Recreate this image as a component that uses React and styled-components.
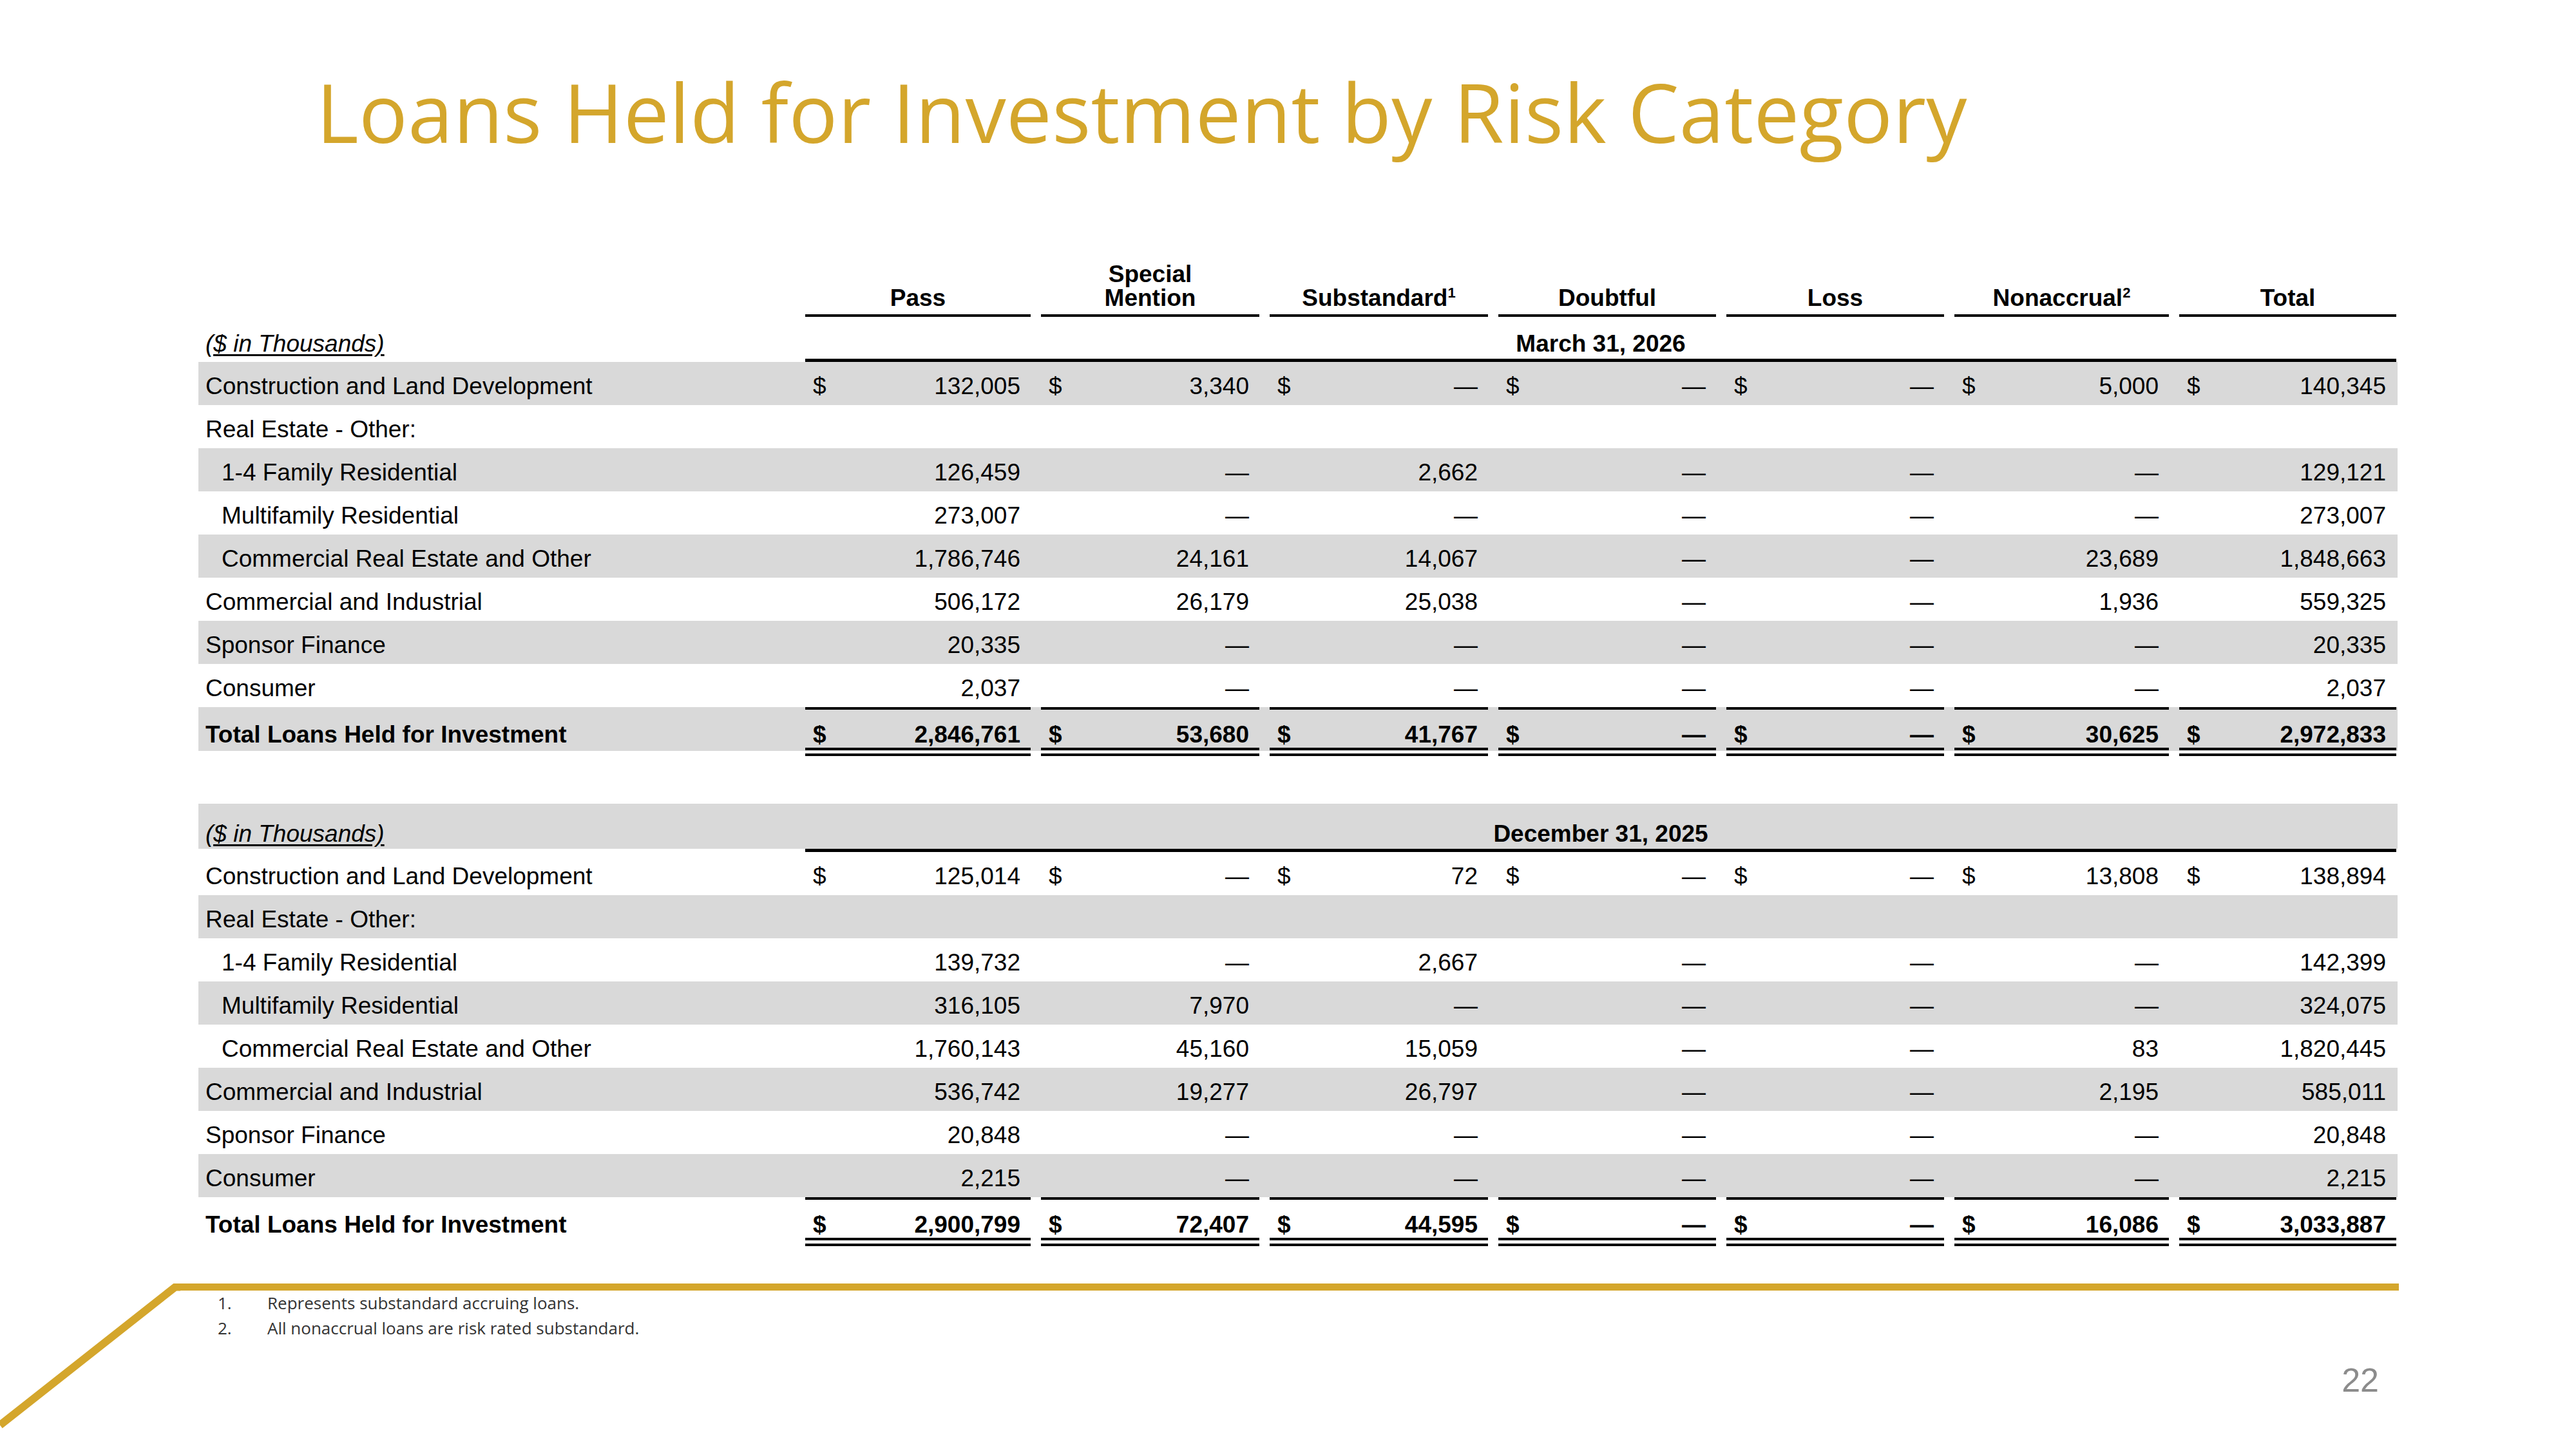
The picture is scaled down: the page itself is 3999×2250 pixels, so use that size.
import React from "react";
import styled, { createGlobalStyle } from "styled-components";

const GOLD = "#D4A62C";
const SHADE = "#D9D9D9";
const COLS = "926px 350px 339px 339px 338px 338px 333px 337px";

const sections = [
  {
    period: "March 31, 2026",
    shadeFirst: true,
    rows: [
      { label: "Construction and Land Development", dollar: true, values: ["132,005", "3,340", "—", "—", "—", "5,000", "140,345"] },
      { label: "Real Estate - Other:", values: [] },
      { label: "1-4 Family Residential", indent: true, values: ["126,459", "—", "2,662", "—", "—", "—", "129,121"] },
      { label: "Multifamily Residential", indent: true, values: ["273,007", "—", "—", "—", "—", "—", "273,007"] },
      { label: "Commercial Real Estate and Other", indent: true, values: ["1,786,746", "24,161", "14,067", "—", "—", "23,689", "1,848,663"] },
      { label: "Commercial and Industrial", values: ["506,172", "26,179", "25,038", "—", "—", "1,936", "559,325"] },
      { label: "Sponsor Finance", values: ["20,335", "—", "—", "—", "—", "—", "20,335"] },
      { label: "Consumer", values: ["2,037", "—", "—", "—", "—", "—", "2,037"] },
    ],
    total: ["2,846,761", "53,680", "41,767", "—", "—", "30,625", "2,972,833"],
  },
  {
    period: "December 31, 2025",
    shadeFirst: false,
    rows: [
      { label: "Construction and Land Development", dollar: true, values: ["125,014", "—", "72", "—", "—", "13,808", "138,894"] },
      { label: "Real Estate - Other:", values: [] },
      { label: "1-4 Family Residential", indent: true, values: ["139,732", "—", "2,667", "—", "—", "—", "142,399"] },
      { label: "Multifamily Residential", indent: true, values: ["316,105", "7,970", "—", "—", "—", "—", "324,075"] },
      { label: "Commercial Real Estate and Other", indent: true, values: ["1,760,143", "45,160", "15,059", "—", "—", "83", "1,820,445"] },
      { label: "Commercial and Industrial", values: ["536,742", "19,277", "26,797", "—", "—", "2,195", "585,011"] },
      { label: "Sponsor Finance", values: ["20,848", "—", "—", "—", "—", "—", "20,848"] },
      { label: "Consumer", values: ["2,215", "—", "—", "—", "—", "—", "2,215"] },
    ],
    total: ["2,900,799", "72,407", "44,595", "—", "—", "16,086", "3,033,887"],
  },
];

const GlobalStyle = createGlobalStyle`
  html, body {
    margin: 0;
    padding: 0;
    background: #fff;
  }
  body {
    font-family: "Liberation Sans", Arial, sans-serif;
    color: #000;
  }
`;

const Slide = styled.div`
  width: 3999px;
  height: 2250px;
  overflow: hidden;
  background: #fff;
  display: flex;
  flex-direction: column;
`;

const Title = styled.h1`
  margin: 0;
  padding: 110px 0 0 491px;
  font-family: "Open Sans", "Noto Sans", sans-serif;
  font-weight: 400;
  font-size: 126px;
  line-height: 126px;
  letter-spacing: 0.35px;
  color: ${GOLD};
`;

const Table = styled.div`
  margin: 159px 0 0 308px;
  width: 3414px;
  display: flex;
  flex-direction: column;
  font-size: 37px;
  line-height: 37px;
`;

const Grid = styled.div`
  display: grid;
  grid-template-columns: ${COLS};
  column-gap: 16px;
  box-sizing: border-box;
`;

// grey band that can stop short of the rule drawn at the row's foot
const shadeBg = (on, clip = 0) =>
  on
    ? `linear-gradient(${SHADE}, ${SHADE}) top left / 100% calc(100% - ${clip}px) no-repeat`
    : "transparent";

const HeadRow = styled(Grid)`
  height: 97px;
`;

const HeadCell = styled.div`
  display: flex;
  flex-direction: column;
  justify-content: flex-end;
  align-items: center;
  padding-bottom: 7px;
  border-bottom: 4px solid #000;
  font-weight: 700;
  text-align: center;
`;

const Sup = styled.sup`
  font-size: 22px;
  line-height: 0;
  vertical-align: 13px;
`;

const PeriodRow = styled(Grid)`
  height: ${(p) => p.$h}px;
  align-items: end;
  margin-top: ${(p) => p.$gap || 0}px;
  background: ${(p) => shadeBg(p.$shade, 5)};
`;

const UnitsLabel = styled.div`
  padding: 0 0 10px 11px;
  font-style: italic;
  text-decoration: underline;
  text-underline-offset: 4px;
`;

const PeriodTitle = styled.div`
  grid-column: 2 / -1;
  padding-bottom: 5px;
  border-bottom: 5px solid #000;
  font-weight: 700;
  text-align: center;
`;

const DataRow = styled(Grid)`
  height: 67px;
  padding-top: 8px;
  align-items: center;
  background: ${(p) => shadeBg(p.$shade)};
`;

const Label = styled.div`
  padding-left: ${(p) => (p.$indent ? 36 : 11)}px;
  white-space: nowrap;
`;

const Value = styled.div`
  display: flex;
  justify-content: space-between;
  padding: 0 16px 0 12px;
  white-space: nowrap;
`;

const TotalRow = styled(Grid)`
  height: 76px;
  font-weight: 700;
  background: ${(p) => shadeBg(p.$shade, 8)};
`;

const TotalLabel = styled(Label)`
  align-self: end;
  padding-bottom: 15px;
`;

const TotalValue = styled(Value)`
  align-items: flex-end;
  padding-bottom: 2px;
  border-top: 4px solid #000;
  border-bottom: 13px double #000;
`;

const Footer = styled.div`
  margin-top: 58px;
  flex: 1;
  display: flex;
`;

const Slash = styled.svg`
  flex: none;
  display: block;
`;

const FootBody = styled.div`
  width: 3444px;
  border-top: 11px solid ${GOLD};
  display: flex;
  flex-direction: column;
`;

const Notes = styled.ol`
  margin: 0;
  padding: 0 0 0 58px;
  list-style: none;
  font-family: "Open Sans", "Noto Sans", sans-serif;
  font-size: 26px;
  line-height: 39px;
  color: #333;
`;

const Note = styled.li`
  display: grid;
  grid-template-columns: 77px 1fr;
`;

const PageNumber = styled.div`
  align-self: flex-end;
  margin: 35px 31px 0 0;
  font-size: 52px;
  line-height: 52px;
  color: #8c8c8c;
`;

const headers = [
  "Pass",
  <>Special<br />Mention</>,
  <>Substandard<Sup>1</Sup></>,
  "Doubtful",
  "Loss",
  <>Nonaccrual<Sup>2</Sup></>,
  "Total",
];

const Cell = ({ value, dollar, as: Comp = Value }) => (
  <Comp>
    <span>{dollar ? "$" : ""}</span>
    <span>{value}</span>
  </Comp>
);

const Section = ({ data, first }) => (
  <>
    <PeriodRow $h={first ? 70 : 75} $gap={first ? 0 : 74} $shade={!data.shadeFirst}>
      <UnitsLabel>($ in Thousands)</UnitsLabel>
      <PeriodTitle>{data.period}</PeriodTitle>
    </PeriodRow>
    {data.rows.map((row, i) => (
      <DataRow key={row.label} $shade={(i % 2 === 0) === data.shadeFirst}>
        <Label $indent={row.indent}>{row.label}</Label>
        {row.values.map((v, j) => (
          <Cell key={j} value={v} dollar={row.dollar} />
        ))}
      </DataRow>
    ))}
    <TotalRow $shade={data.shadeFirst}>
      <TotalLabel>Total Loans Held for Investment</TotalLabel>
      {data.total.map((v, j) => (
        <Cell key={j} value={v} dollar as={TotalValue} />
      ))}
    </TotalRow>
  </>
);

export default function App() {
  return (
    <>
      <GlobalStyle />
      <Slide>
        <Title>Loans Held for Investment by Risk Category</Title>
        <Table>
          <HeadRow>
            <div />
            {headers.map((h, i) => (
              <HeadCell key={i}>
                <div>{h}</div>
              </HeadCell>
            ))}
          </HeadRow>
          {sections.map((s, i) => (
            <Section key={s.period} data={s} first={i === 0} />
          ))}
        </Table>
        <Footer>
          <Slash width="280" height="256" viewBox="0 0 280 256">
            <polyline
              points="281,5.5 272,5.5 0,220"
              fill="none"
              stroke={GOLD}
              strokeWidth="12"
              strokeLinejoin="miter"
            />
          </Slash>
          <FootBody>
            <Notes>
              <Note>
                <span>1.</span>
                <span>Represents substandard accruing loans.</span>
              </Note>
              <Note>
                <span>2.</span>
                <span>All nonaccrual loans are risk rated substandard.</span>
              </Note>
            </Notes>
            <PageNumber>22</PageNumber>
          </FootBody>
        </Footer>
      </Slide>
    </>
  );
}
